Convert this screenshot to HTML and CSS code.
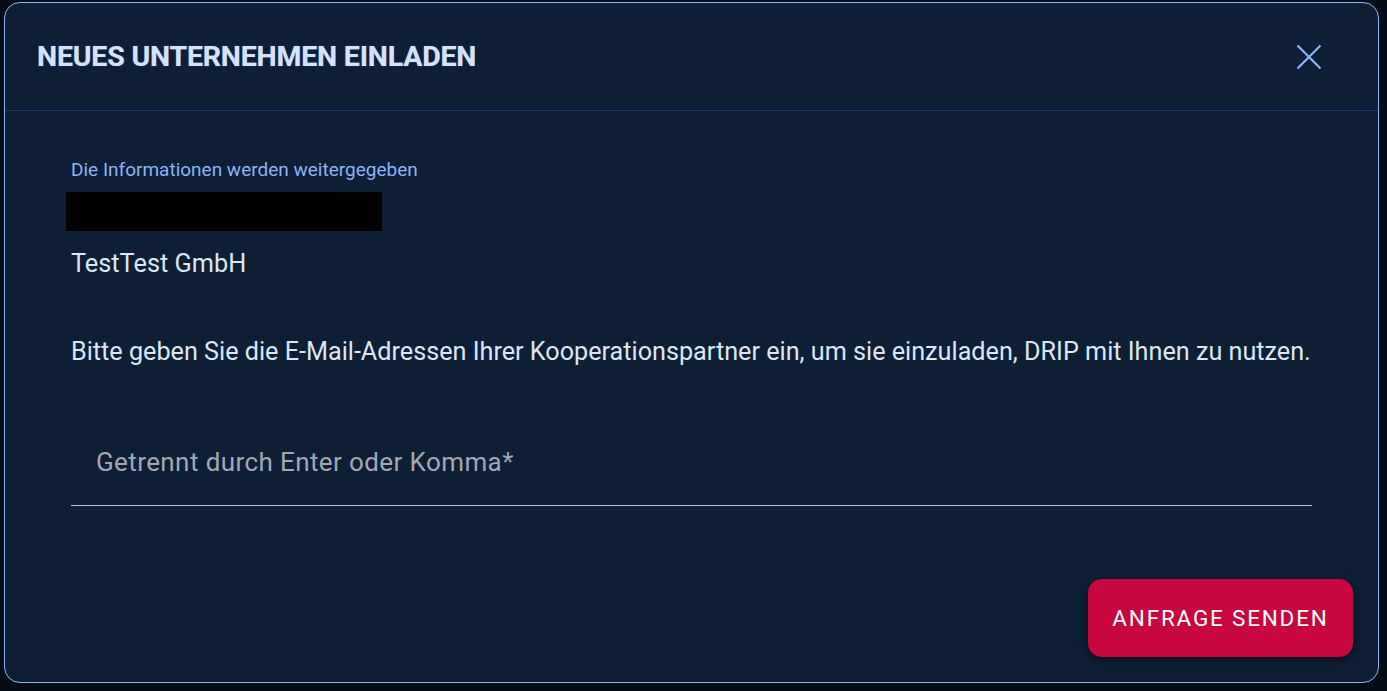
FILE: index.html
```html
<!DOCTYPE html>
<html lang="de">
<head>
<meta charset="utf-8">
<title>Neues Unternehmen einladen</title>
<link rel="stylesheet" href="styles.css">
</head>
<body>
<div class="dialog">
  <header class="dialog-header">
    <h1 class="dialog-title">NEUES UNTERNEHMEN EINLADEN</h1>
    <button class="close-btn" aria-label="Schließen">
      <svg width="26" height="26" viewBox="0 0 26 26"><path d="M1.5 1.5 L24.5 24.5 M24.5 1.5 L1.5 24.5" stroke="#8ab4f8" stroke-width="2.2" fill="none"/></svg>
    </button>
  </header>
  <div class="dialog-body">
    <div class="info-label">Die Informationen werden weitergegeben</div>
    <div class="redacted"></div>
    <div class="company">TestTest GmbH</div>
    <p class="instructions">Bitte geben Sie die E-Mail-Adressen Ihrer Kooperationspartner ein, um sie einzuladen, DRIP mit Ihnen zu nutzen.</p>
    <div class="field">
      <input class="field-input" type="text" placeholder="Getrennt durch Enter oder Komma*">
    </div>
  </div>
  <footer class="dialog-actions">
    <button class="send-btn">ANFRAGE SENDEN</button>
  </footer>
</div>
</body>
</html>
```

FILE: styles.css
```css
html, body {
  margin: 0;
  padding: 0;
  background: #060c17;
  font-family: Roboto, "Noto Sans", sans-serif;
}

body {
  padding: 2px 8px 8px 4px;
}

.dialog {
  box-sizing: border-box;
  height: 681px;
  border: 1px solid #8ab4f8;
  border-radius: 16px;
  background: #0d1e35;
  display: flex;
  flex-direction: column;
}

.dialog-header {
  box-sizing: border-box;
  height: 108px;
  border-bottom: 1px solid #1b3868;
  display: flex;
  align-items: center;
  justify-content: space-between;
  padding: 0 56px 0 32px;
}

.dialog-title {
  margin: 0;
  font-size: 28.5px;
  font-weight: 700;
  letter-spacing: -0.2px;
  color: #d3e2ff;
  text-shadow: 0 0 1px rgba(211, 226, 255, 0.5);
}

.close-btn {
  background: none;
  border: none;
  padding: 0;
  width: 26px;
  height: 26px;
  display: flex;
  align-items: center;
  justify-content: center;
  cursor: pointer;
}

.close-btn svg { display: block; }

.dialog-body {
  flex: 1;
  padding: 48px 66px 0 61px;
  display: flex;
  flex-direction: column;
}

.info-label {
  font-size: 19px;
  line-height: 22px;
  color: #8ab4f8;
  padding-left: 5px;
}

.redacted {
  margin-top: 11px;
  width: 316px;
  height: 39px;
  background: #000;
}

.company {
  margin-top: 18px;
  padding-left: 5px;
  font-size: 25.3px;
  line-height: 30px;
  color: #dbe6f7;
}

.instructions {
  margin: 58px 0 0 0;
  padding-left: 5px;
  font-size: 25.2px;
  line-height: 30px;
  color: #dbe6f7;
  white-space: nowrap;
}

.field {
  margin: 60px 0 0 5px;
  padding-top: 19px;
  border-bottom: 1px solid #b9c3d3;
  height: 79px;
  box-sizing: border-box;
}

.field-input {
  display: block;
  width: 100%;
  box-sizing: border-box;
  background: transparent;
  border: none;
  outline: none;
  padding: 0 25px;
  font-family: Roboto, "Noto Sans", sans-serif;
  font-size: 26px;
  line-height: 32px;
  height: 32px;
  color: #dbe6f7;
}

.field-input::placeholder {
  color: #a1a8b3;
  letter-spacing: 0.4px;
}

.dialog-actions {
  display: flex;
  justify-content: flex-end;
  padding: 0 25px 25px 0;
}

.send-btn {
  width: 265px;
  height: 78px;
  border: none;
  border-radius: 14px;
  background: #c8063f;
  color: #ffffff;
  font-family: Roboto, "Noto Sans", sans-serif;
  font-size: 22.5px;
  font-weight: 400;
  letter-spacing: 1.8px;
  box-shadow: 0 3px 8px rgba(0, 0, 0, 0.45);
  cursor: pointer;
}
```
